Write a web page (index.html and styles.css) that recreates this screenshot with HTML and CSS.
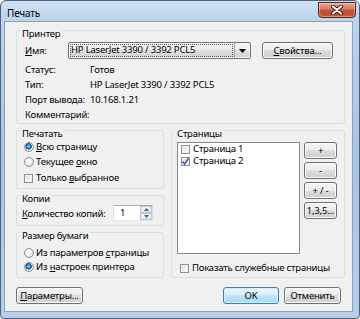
FILE: index.html
```html
<!DOCTYPE html>
<html lang="ru">
<head>
<meta charset="utf-8">
<title>Печать</title>
<link rel="stylesheet" href="styles.css">
</head>
<body>
<div class="window">
  <div class="titlebar">
    <span class="title">Печать</span>
    <div class="close">
      <svg width="14" height="10" viewBox="0 0 14 10">
        <path d="M3 1.5 L11 8.5 M11 1.5 L3 8.5" stroke="#3b0d06" stroke-width="4" stroke-linecap="round"/>
        <path d="M3 1.5 L11 8.5 M11 1.5 L3 8.5" stroke="#ffffff" stroke-width="2.2" stroke-linecap="round"/>
      </svg>
    </div>
  </div>
  <div class="client">
    <div class="group printer">
      <div class="legend">Принтер</div>
      <div class="name-row">
        <span class="name-lbl"><u>И</u>мя:</span>
        <div class="combo">
          <span class="combo-text"><span class="focus">HP LaserJet 3390 / 3392 PCL5</span></span>
          <span class="combo-arrow"><svg width="7" height="4" viewBox="0 0 7 4"><path d="M0 0 H7 L3.5 4 Z" fill="#000"/></svg></span>
        </div>
        <div class="btn props"><u>С</u>войства...</div>
      </div>
      <div class="info">
        <span>Статус:</span><span>Готов</span>
        <span>Тип:</span><span>HP LaserJet 3390 / 3392 PCL5</span>
        <span>Порт вывода:</span><span>10.168.1.21</span>
        <span>Комментарий:</span><span></span>
      </div>
    </div>

    <div class="middle">
      <div class="col-left">
        <div class="group print">
          <div class="legend">Печатать</div>
          <div class="opt r1"><span class="radio on"></span><span><u>В</u>сю страницу</span></div>
          <div class="opt r2"><span class="radio"></span><span>Текущее <u>о</u>кно</span></div>
          <div class="opt r3"><span class="check"></span><span class="ctext">Только <u>в</u>ыбранное</span></div>
        </div>
        <div class="group copies">
          <div class="legend">Копии</div>
          <div class="copies-row">
            <span class="copies-lbl"><u>К</u>оличество копий:</span>
            <div class="spin">
              <span class="spin-val">1</span>
              <span class="spin-btns">
                <span class="spin-b"><svg width="5" height="3" viewBox="0 0 5 3"><path d="M0 3 H5 L2.5 0 Z" fill="#4d6185"/></svg></span>
                <span class="spin-b"><svg width="5" height="3" viewBox="0 0 5 3"><path d="M0 0 H5 L2.5 3 Z" fill="#4d6185"/></svg></span>
              </span>
            </div>
          </div>
        </div>
        <div class="group paper">
          <div class="legend">Размер бумаги</div>
          <div class="opt p1"><span class="radio"></span><span>Из параметров <u>с</u>траницы</span></div>
          <div class="opt p2"><span class="radio on"></span><span>Из <u>н</u>астроек принтера</span></div>
        </div>
      </div>

      <div class="group pages">
        <div class="legend">Страницы</div>
        <div class="pages-body">
          <div class="listbox">
            <div class="item"><span class="check small"></span><span>Страница 1</span></div>
            <div class="item"><span class="check small on"><svg width="9" height="9" viewBox="0 0 9 9"><path d="M1.5 4.5 L3.6 7 L7.6 1.2" stroke="#3d5a9a" stroke-width="1.5" fill="none"/></svg></span><span>Страница 2</span></div>
          </div>
          <div class="side-btns">
            <div class="btn sb">+</div>
            <div class="btn sb">-</div>
            <div class="btn sb">+ / -</div>
            <div class="btn sb">1,3,5...</div>
          </div>
        </div>
        <div class="opt show"><span class="check"></span><span class="ctext">Показать служебные страницы</span></div>
      </div>
    </div>

    <div class="footer">
      <div class="btn params"><u>П</u>араметры...</div>
      <div class="spacer"></div>
      <div class="btn ok">OK</div>
      <div class="btn cancel">Отменить</div>
    </div>
  </div>
</div>
</body>
</html>
```

FILE: styles.css
```css
* { box-sizing: border-box; }
html, body { margin: 0; padding: 0; }
body {
  width: 360px;
  height: 319px;
  overflow: hidden;
  background: #ffffff;
  font-family: "Noto Sans", "DejaVu Sans", sans-serif;
  font-size: 9.5px;
  letter-spacing: -0.2px;
  white-space: nowrap;
  color: #000;
}
u { text-decoration: underline; text-underline-offset: 1px; }

.window {
  width: 360px;
  height: 319px;
  display: flex;
  flex-direction: column;
  border: 1px solid #4f627c;
  border-radius: 6px 6px 4px 4px;
  background: linear-gradient(180deg, #cfe0f2 0px, #bcd3eb 20px, #a9c3e2 50%, #b7cfe9 100%);
  padding: 0 6px 6px 3px;
}

.titlebar {
  height: 20px;
  display: flex;
  align-items: flex-start;
  justify-content: space-between;
}
.title {
  margin: 6px 0 0 3px;
  line-height: 13px;
  font-size: 10px;
}
.close {
  width: 38px;
  height: 16px;
  margin: 1px -3px 0 0;
  border: 1px solid #5b2219;
  border-radius: 0 0 4px 4px;
  background: linear-gradient(180deg, #e4a594 0%, #d6806d 40%, #c24a33 55%, #c8583c 100%);
  box-shadow: inset 0 0 0 1px rgba(255,255,255,0.35);
  display: flex;
  align-items: center;
  justify-content: center;
}

.client {
  flex: 1;
  border: 1px solid #8aa0bd;
  background: #f0f0f0;
  display: flex;
  flex-direction: column;
}

.group {
  border: 1px solid #d5dfe5;
  border-radius: 3px;
}
.legend {
  width: fit-content;
  height: 13px;
  line-height: 13px;
  margin: -4px 0 0 3px;
  padding: 0 2px;
  background: #f0f0f0;
}

/* Printer */
.printer {
  margin: 8px 0 0 11px;
  width: 329px;
  height: 94px;
}
.name-row {
  display: flex;
  align-items: center;
  height: 17px;
  margin: 2px 0 0 8px;
}
.name-lbl { width: 43px; }
.combo {
  width: 183px;
  height: 17px;
  display: flex;
  border: 1px solid #707070;
  border-radius: 2px;
  background: linear-gradient(180deg, #f4f4f4 0%, #ececec 50%, #dfdfdf 50%, #d2d2d2 100%);
  box-shadow: inset 0 0 0 1px #fbfbfb;
}
.combo-text {
  flex: 1;
  display: flex;
  align-items: center;
  padding: 1px;
}
.focus {
  flex: 1;
  height: 13px;
  line-height: 12px;
  padding-left: 1px;
  outline: 1px dotted #555;
  outline-offset: -1px;
}
.combo-arrow {
  width: 16px;
  border-left: 1px solid #a0a0a0;
  display: flex;
  align-items: center;
  justify-content: center;
}

.btn {
  height: 17px;
  display: flex;
  align-items: center;
  justify-content: center;
  border: 1px solid #707070;
  border-radius: 3px;
  background: linear-gradient(180deg, #f4f4f4 0%, #ebebeb 50%, #dddddd 50%, #cfcfcf 100%);
  box-shadow: inset 0 0 0 1px #fbfbfb;
}
.props { margin-left: 11px; width: 71px; }

.info {
  display: grid;
  grid-template-columns: 65px auto;
  grid-auto-rows: 15px;
  line-height: 15px;
  margin: 3px 0 0 8px;
}

/* Middle */
.middle {
  display: flex;
  gap: 7px;
  margin: 6px 0 0 11px;
}
.col-left {
  width: 148px;
  display: flex;
  flex-direction: column;
  gap: 6px;
}
.print { height: 59px; padding-left: 7px; }
.print .legend, .paper .legend { margin-left: -4px; }
.opt {
  display: flex;
  align-items: center;
  height: 14px;
  line-height: 14px;
}
.r2 { margin-top: 1px; }
.r3 { margin-top: 2px; }

.radio {
  width: 10px;
  height: 10px;
  margin-right: 2px;
  border-radius: 50%;
  border: 1px solid #8e8f8f;
  background: radial-gradient(circle at 40% 35%, #ffffff 0%, #e9e9e9 60%, #d2d2d2 100%);
  flex: none;
}
.radio.on {
  background: radial-gradient(circle at 45% 42%, #a8dcf8 0px, #3a8ccc 1.6px, #1d5590 3px, #e6e6e6 3.4px, #f6f6f6 100%);
}
.check {
  width: 9px;
  height: 9px;
  margin-right: 3px;
  border: 1px solid #8e8f8f;
  background: linear-gradient(135deg, #d6d6d6 0%, #f2f2f2 60%, #ffffff 100%);
  box-shadow: inset 0 0 0 1px #f4f4f4;
  flex: none;
  position: relative;
}
.check svg { position: absolute; left: -1px; top: -1px; }

.copies { height: 31px; }
.copies-row {
  display: flex;
  align-items: center;
  height: 16px;
  margin-left: 5px;
}
.copies-lbl { width: 91px; }
.spin {
  width: 40px;
  height: 16px;
  display: flex;
  background: #fff;
  border: 1px solid #abadb3;
  border-left-color: #dbdfe6;
  border-right-color: #dbdfe6;
  border-bottom-color: #e3e9ef;
}
.spin-val { flex: 1; padding-left: 6px; line-height: 14px; }
.spin-btns {
  width: 12px;
  display: flex;
  flex-direction: column;
}
.spin-b {
  flex: 1;
  display: flex;
  align-items: center;
  justify-content: center;
  border: 1px solid #b9c4d4;
  background: linear-gradient(180deg, #f6f7f9, #e3e7ee);
}

.paper { height: 46px; padding-left: 7px; }
.p1 { margin-top: 4px; }

/* Pages */
.pages {
  width: 174px;
  height: 148px;
}
.pages-body {
  display: flex;
  margin: 2px 0 0 5px;
}
.listbox {
  width: 123px;
  height: 112px;
  background: #fff;
  border: 1px solid #828790;
  padding-left: 3px;
}
.item {
  display: flex;
  align-items: center;
  height: 12px;
  line-height: 12px;
}
.side-btns {
  margin-left: 4px;
  width: 33px;
  display: flex;
  flex-direction: column;
  gap: 3px;
}
.sb { width: 33px; }
.show { margin: 7px 0 0 8px; }

/* Footer */
.footer {
  display: flex;
  margin-top: 9px;
  padding: 0 11px;
  gap: 5px;
}
.spacer { flex: 1; }
.params { width: 67px; }
.ok {
  width: 56px;
  border-color: #3c7fb1;
  background: linear-gradient(180deg, #eaf6fd 0%, #d9f0fc 50%, #bee6fd 50%, #a7d9f5 100%);
  box-shadow: inset 0 0 0 1px #d4efff;
}
.cancel { width: 57px; }
```
